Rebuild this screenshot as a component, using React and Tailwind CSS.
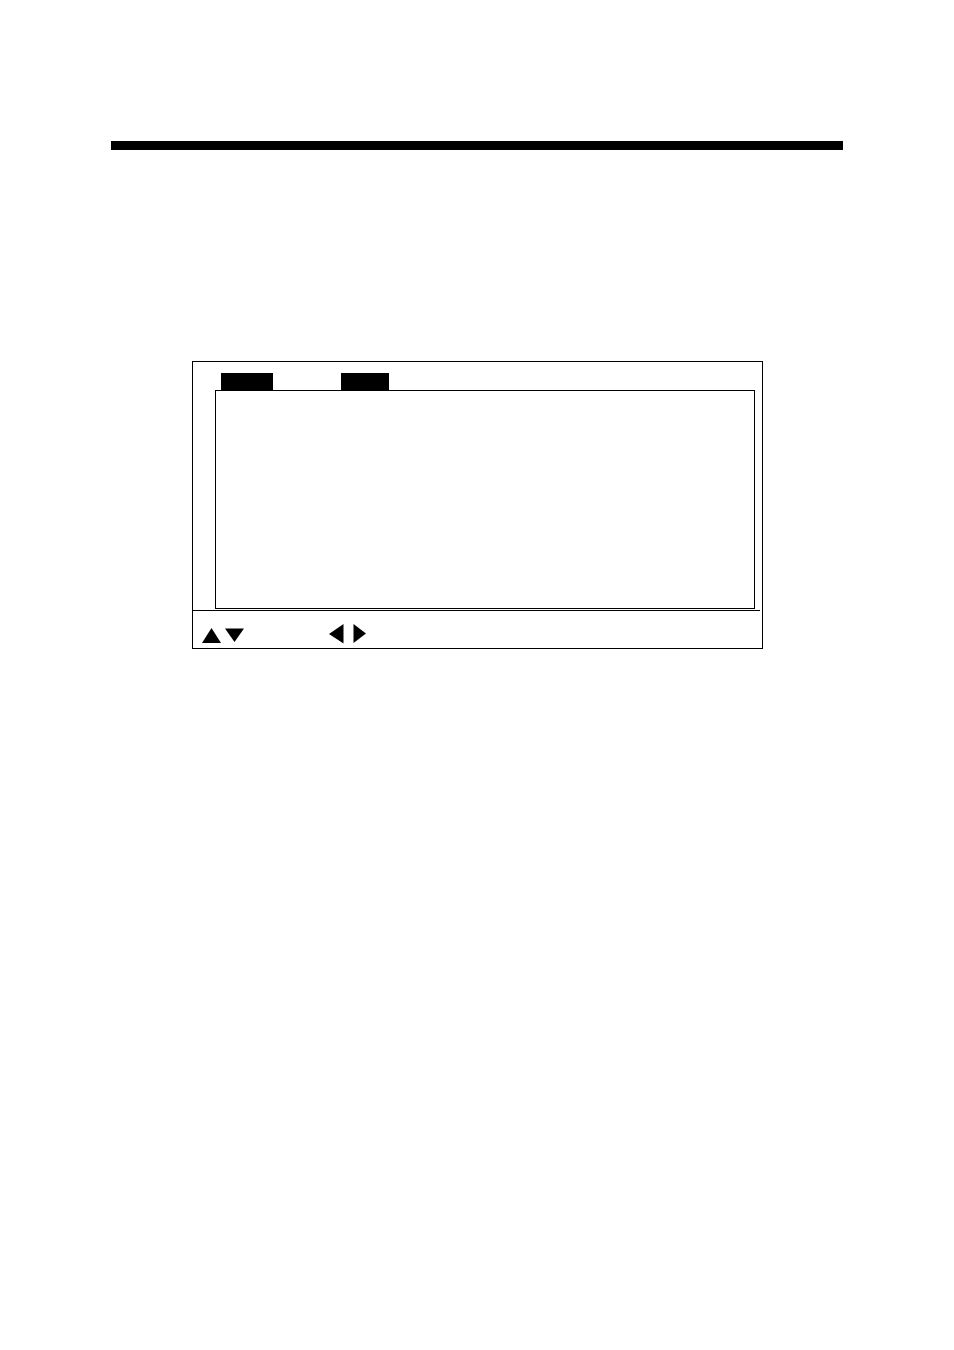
function Arrow({ points, className }) {
  return (
    <svg className={className} fill="currentColor" aria-hidden="true">
      <polygon points={points} />
    </svg>
  )
}

function Screen() {
  return (
    <section className="border border-black pt-[11px]">
      <div className="ml-7 flex gap-[68px]">
        <div className="h-[17px] w-[52px] bg-black" />
        <div className="h-[17px] w-12 bg-black" />
      </div>

      <div className="mr-[7px] ml-[22px] h-[219px] border border-black" />

      <footer className="mt-px mr-0.5 flex h-[38px] gap-[85px] border-t border-black pt-[13px] pl-[9px]">
        <div className="flex gap-1">
          <Arrow className="h-5 w-[19px]" points="9.5,4 19,19 0,19" />
          <Arrow className="h-5 w-[19px]" points="0,4.5 19,4.5 9.5,18" />
        </div>
        <div className="flex gap-[9px]">
          <Arrow className="h-5 w-[15px]" points="14.5,0 14.5,19.5 0,10" />
          <Arrow className="h-5 w-[13px]" points="0.5,0 13,9.5 0.5,19" />
        </div>
      </footer>
    </section>
  )
}

export default function App() {
  return (
    <main className="min-h-screen bg-white px-[111px] pt-[141px] text-black">
      <div className="h-[9px] bg-black" />
      <div className="mt-[211px] mr-20 ml-[81px]">
        <Screen />
      </div>
    </main>
  )
}
